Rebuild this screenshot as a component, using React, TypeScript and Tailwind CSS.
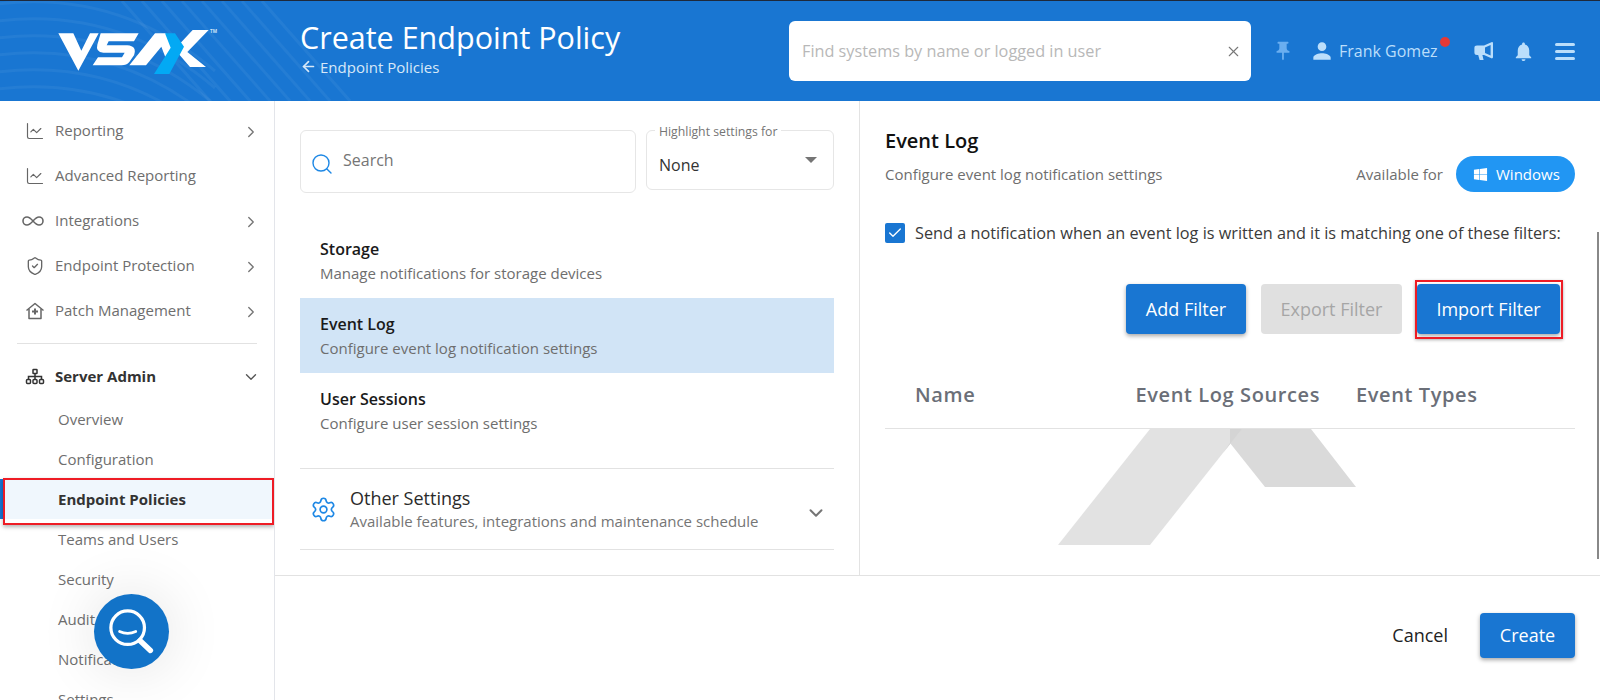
import React from "react";
import { ArrowLeft, Check, ChevronDown, ChevronRight, ChartLine, Infinity as InfinityIcon, Search, Settings, ShieldCheck, X } from "lucide-react";
import { FaWindows } from "react-icons/fa";
import { MdNotifications, MdPerson, MdPushPin } from "react-icons/md";

function Logo() {
  return (
    <svg width="200" height="70" viewBox="0 0 600 210" className="block">
      <g fill="#ffffff">
        <polygon points="55,52 100,52 124,104 150,52 176,52 115,164" />
        <path d="M182 52H296L282 76H206L200 88H262Q292 90 282 118L268 138Q260 148 245 148H158L174 124H246L254 110H190Q166 108 172 86Z" />
        <polygon points="268,148 345,52 378,52 398,92 378,128 364,92 318,148" />
        <polygon points="458,42 506,42 442,108 498,153 450,153 404,100" />
      </g>
      <polygon points="375,52 405,52 432,92 388,174 342,174 392,95" fill="#03a9f4" />
      <text x="510" y="52" fill="#cfe3f7" fontSize="14" fontWeight="700" fontFamily="'Open Sans', sans-serif">TM</text>
    </svg>
  );
}

function Waves() {
  const arcs = [0, 1, 2, 3, 4, 5, 6];
  const lines = [0, 1, 2, 3, 4, 5, 6, 7];
  return (
    <svg width="420" height="100" viewBox="0 0 420 100" fill="none" stroke="#ffffff" strokeOpacity="0.05" strokeWidth="3" className="absolute left-0 top-0">
      {arcs.map((i) => (
        <path key={i} d={`M-10 ${4 + i * 17}C60 ${-6 + i * 17} 140 ${6 + i * 17} 215 ${70 + i * 17}`} />
      ))}
      {lines.map((i) => (
        <path key={`l${i}`} d={`M${122 + i * 20} 0L${210 + i * 20} 100`} />
      ))}
    </svg>
  );
}

function Megaphone() {
  return (
    <svg width="22" height="22" viewBox="0 0 22 22" fill="#bbdefb">
      <path fillRule="evenodd" d="M19 2 20 2.6V17.6L19 18.4 11 15H9.4L10.6 20H6.6L5.2 15H4Q1.4 15 1.4 12.5V8Q1.4 5.6 4 5.6H11ZM17.6 5 12 7.6V13L17.6 15.6Z" />
    </svg>
  );
}

function PatchIcon() {
  return (
    <svg width="20" height="20" viewBox="0 0 20 20" fill="none" stroke="#666" strokeWidth="1.5" strokeLinejoin="round">
      <path d="M1.5 9.5 10 2.5l8.5 7" />
      <path d="M4 8v9.5h12V8" />
      <path d="M10 7.5v6M7 10.5h6" strokeWidth="2" />
    </svg>
  );
}

function OrgIcon() {
  return (
    <svg width="20" height="20" viewBox="0 0 20 20" fill="none" stroke="#333" strokeWidth="1.5">
      <rect x="8" y="2.5" width="4" height="4" rx="0.5" />
      <rect x="1.5" y="12.5" width="4" height="4" rx="1" />
      <rect x="8" y="12.5" width="4" height="4" rx="1" />
      <rect x="14.5" y="12.5" width="4" height="4" rx="1" />
      <path d="M10 6.5v6M3.5 12.5V9.5h13v3" />
    </svg>
  );
}

function FabIcon() {
  return (
    <svg width="52" height="52" viewBox="0 0 48 48" fill="none" stroke="#ffffff" strokeLinecap="round">
      <circle cx="20" cy="20" r="15.5" strokeWidth="3" />
      <path d="M12.5 23.5Q20 27 27.5 23.5" strokeWidth="2.5" />
      <path d="M31.5 32 41 41" strokeWidth="5" />
    </svg>
  );
}

function NavItem({ icon, label, arrow }: { icon: React.ReactNode; label: string; arrow?: boolean }) {
  return (
    <div className="flex h-[45px] items-center text-[15px] text-[#6e6e6e]">
      <span className="flex w-[55px] justify-end pr-[10px]">{icon}</span>
      <span className="flex-1">{label}</span>
      {arrow && <ChevronRight size={18} strokeWidth={1.8} className="mr-[14px] mt-[2px] text-[#757575]" />}
    </div>
  );
}

function SubItem({ label }: { label: string }) {
  return <div className="flex h-[40px] items-center pl-[58px] text-[15px] text-[#6e6e6e]">{label}</div>;
}

function ListItem({ title, sub, active }: { title: string; sub: string; active?: boolean }) {
  return (
    <div className={`flex h-[75px] flex-col justify-center pl-[20px] ${active ? "bg-[#d1e4f6]" : ""}`}>
      <div className="text-[16px] font-semibold leading-[24px] text-[#1a1a1a]">{title}</div>
      <div className="text-[15px] leading-[24px] text-[#6e6e6e]">{sub}</div>
    </div>
  );
}

export default function App() {
  return (
    <div className="flex h-[700px] w-[1600px] flex-col overflow-hidden bg-white font-['Open_Sans',sans-serif]">
      <header className="relative flex h-[101px] shrink-0 items-center border-t border-t-[#1e293b] bg-[#1976d2] text-white">
        <Waves />
        <div className="relative w-[300px] pl-[40px]">
          <Logo />
        </div>
        <div className="relative w-[489px] pb-[8px]">
          <div className="text-[30.5px] leading-[38px]">Create Endpoint Policy</div>
          <div className="mt-[1px] flex items-center gap-[3px] text-[15px] leading-[20px] text-[#d7e8f8]">
            <ArrowLeft size={17} strokeWidth={2.4} />
            <span>Endpoint Policies</span>
          </div>
        </div>
        <div className="relative flex h-[60px] w-[462px] items-center justify-between rounded-[6px] bg-white pl-[13px] pr-[9px]">
          <span className="text-[16.25px] text-[#b8b8b8]">Find systems by name or logged in user</span>
          <X size={17} strokeWidth={1.5} className="text-[#777777]" />
        </div>
        <MdPushPin size={22} className="relative ml-[21px] text-[#6aaef0]" />
        <MdPerson size={26} className="relative ml-[15px] text-[#bbdefb]" />
        <div className="relative ml-[4px] text-[16px] text-[#bbdefb]">
          Frank Gomez
          <span className="absolute -right-[12px] -top-[2px] h-[10px] w-[10px] rounded-full bg-[#e53935]" />
        </div>
        <span className="relative ml-[35px]"><Megaphone /></span>
        <MdNotifications size={23} className="relative ml-[17px] text-[#bbdefb]" />
        <div className="relative ml-[20px] flex w-[20px] flex-col gap-[4px]">
          <span className="h-[3px] rounded-full bg-[#bbdefb]" />
          <span className="h-[3px] rounded-full bg-[#bbdefb]" />
          <span className="h-[3px] rounded-full bg-[#bbdefb]" />
        </div>
      </header>

      <div className="flex min-h-0 flex-1">
        <aside className="relative w-[275px] shrink-0 overflow-hidden border-r border-r-[#e3e5ea] pt-[7px]">
          <NavItem icon={<ChartLine size={20} strokeWidth={1.4} className="text-[#666666]" />} label="Reporting" arrow />
          <NavItem icon={<ChartLine size={20} strokeWidth={1.4} className="text-[#666666]" />} label="Advanced Reporting" />
          <NavItem icon={<InfinityIcon size={24} strokeWidth={1.6} className="text-[#666666]" />} label="Integrations" arrow />
          <NavItem icon={<ShieldCheck size={20} strokeWidth={1.6} className="text-[#666666]" />} label="Endpoint Protection" arrow />
          <NavItem icon={<PatchIcon />} label="Patch Management" arrow />
          <div className="mx-[17px] mb-[10px] mt-[10px] h-px w-[240px] bg-[#e2e2e2]" />
          <div className="flex h-[45px] items-center text-[15px] font-bold text-[#333333]">
            <span className="flex w-[55px] justify-end pr-[10px]"><OrgIcon /></span>
            <span className="flex-1">Server Admin</span>
            <ChevronDown size={18} strokeWidth={1.8} className="mr-[14px] text-[#555555]" />
          </div>
          <SubItem label="Overview" />
          <SubItem label="Configuration" />
          <div className="relative flex h-[40px] items-center border-l-[3px] border-l-[#1976d2] bg-[#f0f7fd] pl-[55px] text-[15px] font-bold text-[#333333]">
            Endpoint Policies
            <span className="absolute -bottom-[6px] left-0 -top-[1px] w-[271px] border-2 border-[#ee1c25] shadow-[0_2px_4px_rgba(0,0,0,0.3)]" />
          </div>
          <SubItem label="Teams and Users" />
          <SubItem label="Security" />
          <SubItem label="Audit" />
          <SubItem label="Notifications" />
          <SubItem label="Settings" />
          <div className="absolute left-[94px] top-[493px] flex h-[75px] w-[75px] items-center justify-center rounded-full bg-[#1273c8] shadow-[0_0_60px_rgba(0,0,0,0.12)]">
            <FabIcon />
          </div>
        </aside>

        <main className="flex min-w-0 flex-1 flex-col">
          <div className="flex h-[474px] shrink-0">
            <section className="w-[585px] shrink-0 border-r border-r-[#e3e3e3] pl-[25px] pr-[25px] pt-[29px]">
              <div className="flex items-start gap-[10px]">
                <div className="flex h-[63px] w-[336px] items-center rounded-[6px] border border-[#e6e6e6] pl-[9px]">
                  <Search size={24} strokeWidth={1.4} className="mt-[5px] text-[#1e88e5]" />
                  <span className="ml-[9px] pb-[4px] text-[16px] text-[#757575]">Search</span>
                </div>
                <div className="relative flex h-[60px] w-[188px] items-center justify-between rounded-[6px] border border-[#e6e6e6] pl-[12px] pr-[16px] pt-[10px]">
                  <span className="absolute -top-[7px] left-[8px] bg-white px-[4px] text-[12.25px] leading-[16px] text-[#757575]">Highlight settings for</span>
                  <span className="text-[16px] text-[#333333]">None</span>
                  <span className="mb-[11px] h-0 w-0 border-x-[6px] border-t-[6px] border-x-transparent border-t-[#757575]" />
                </div>
              </div>
              <div className="mt-[30px]">
                <ListItem title="Storage" sub="Manage notifications for storage devices" />
                <ListItem title="Event Log" sub="Configure event log notification settings" active />
                <ListItem title="User Sessions" sub="Configure user session settings" />
              </div>
              <div className="mt-[20px] flex h-[82px] items-center border-y border-y-[#e2e2e2]">
                <Settings size={27} strokeWidth={1.5} className="ml-[10px] text-[#1e88e5]" />
                <div className="ml-[13px] flex-1">
                  <div className="text-[18px] font-medium leading-[24px] text-[#2a2a2a]">Other Settings</div>
                  <div className="text-[15px] leading-[22px] text-[#757575]">Available features, integrations and maintenance schedule</div>
                </div>
                <ChevronDown size={22} strokeWidth={2.2} className="mr-[7px] mt-[8px] text-[#757575]" />
              </div>
            </section>

            <section className="relative min-w-0 flex-1 overflow-hidden px-[25px] pt-[28px]">
              <div className="text-[20px] font-semibold leading-[24px] text-[#111111]">Event Log</div>
              <div className="mt-[3px] flex h-[36px] items-center">
                <span className="flex-1 text-[15px] text-[#6e6e6e]">Configure event log notification settings</span>
                <span className="mr-[13px] text-[15px] text-[#6e6e6e]">Available for</span>
                <span className="flex h-[36px] w-[119px] items-center gap-[8px] rounded-full bg-[#2196f3] pl-[17px] text-[15px] font-medium text-white">
                  <FaWindows size={15} />
                  Windows
                </span>
              </div>
              <div className="mt-[29px] flex items-center gap-[10px]">
                <span className="flex h-[20px] w-[20px] items-center justify-center rounded-[2px] bg-[#1976d2]">
                  <Check size={16} strokeWidth={2} className="text-white" />
                </span>
                <span className="text-[16.25px] text-[#3a3a3a]">Send a notification when an event log is written and it is matching one of these filters:</span>
              </div>
              <div className="mr-[15px] mt-[39px] flex justify-end gap-[15px] text-[18px] font-medium">
                <button className="h-[50px] w-[120px] rounded-[4px] bg-[#1976d2] text-white shadow-[0_2px_4px_rgba(0,0,0,0.35)]">Add Filter</button>
                <button className="h-[50px] w-[141px] rounded-[4px] bg-[#e0e0e0] text-[#a6a6a6]">Export Filter</button>
                <button className="relative h-[50px] w-[143px] rounded-[4px] bg-[#1976d2] text-white shadow-[0_2px_4px_rgba(0,0,0,0.35)]">
                  Import Filter
                  <span className="absolute -bottom-[5px] -left-[2px] -right-[3px] -top-[4px] border-2 border-[#ee1c25] shadow-[0_1px_3px_rgba(0,0,0,0.3)]" />
                </button>
              </div>
              <div className="mt-[43px] grid h-[52px] grid-cols-[220.5px_220.5px_1fr] items-start border-b border-b-[#e2e2e2] pl-[30px] text-[20px] font-semibold leading-[36px] tracking-[0.6px] text-[#6b6f78]">
                <span>Name</span>
                <span>Event Log Sources</span>
                <span>Event Types</span>
              </div>
              <svg width="300" height="116" viewBox="0 0 300 116" className="ml-[173px] block">
                <polygon points="172,0 253,0 298,58 207,58 172,14" fill="#dadada" />
                <polygon points="92,0 184,0 92,116 0,116" fill="#e2e2e2" />
                <polygon points="172,0 184,0 165,24 172,14" fill="#d4d4d4" />
              </svg>
              <span className="absolute right-[1px] top-[131px] h-[327px] w-[2px] bg-[#888888]" />
            </section>
          </div>

          <footer className="flex flex-1 items-start justify-end border-t border-t-[#e2e2e2] pr-[25px] pt-[37px]">
            <button className="mr-[32px] h-[45px] text-[18px] font-medium text-[#222222]">Cancel</button>
            <button className="h-[45px] w-[95px] rounded-[4px] bg-[#1976d2] text-[18px] font-medium text-white shadow-[0_2px_4px_rgba(0,0,0,0.35)]">Create</button>
          </footer>
        </main>
      </div>
    </div>
  );
}
